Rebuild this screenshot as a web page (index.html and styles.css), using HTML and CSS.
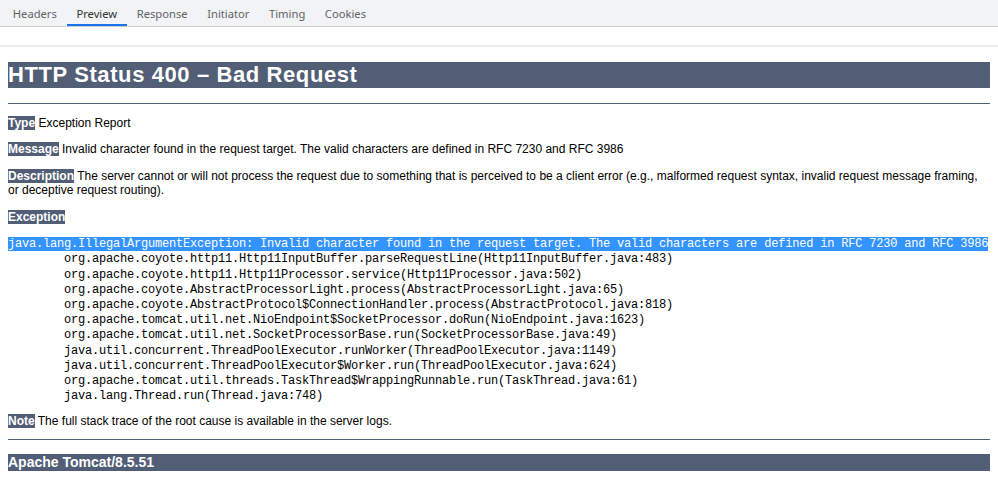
FILE: index.html
```html
<!DOCTYPE html>
<html>
<head>
<meta charset="utf-8">
<title>HTTP Status 400 – Bad Request</title>
<link rel="stylesheet" href="styles.css">
</head>
<body>
<div class="tabs">
  <div class="tab">Headers</div>
  <div class="tab active">Preview</div>
  <div class="tab">Response</div>
  <div class="tab">Initiator</div>
  <div class="tab">Timing</div>
  <div class="tab">Cookies</div>
</div>
<div class="spacer"></div>
<div class="divider"></div>
<div class="preview">
<h1>HTTP Status 400 – Bad Request</h1>
<hr class="line">
<p><b>Type</b> Exception Report</p>
<p><b>Message</b> Invalid character found in the request target. The valid characters are defined in RFC 7230 and RFC 3986</p>
<p><b>Description</b> The server cannot or will not process the request due to something that is perceived to be a client error (e.g., malformed request syntax, invalid request message framing, or deceptive request routing).</p>
<p><b>Exception</b></p>
<pre><span class="sel">java.lang.IllegalArgumentException: Invalid character found in the request target. The valid characters are defined in RFC 7230 and RFC 3986</span>
	org.apache.coyote.http11.Http11InputBuffer.parseRequestLine(Http11InputBuffer.java:483)
	org.apache.coyote.http11.Http11Processor.service(Http11Processor.java:502)
	org.apache.coyote.AbstractProcessorLight.process(AbstractProcessorLight.java:65)
	org.apache.coyote.AbstractProtocol$ConnectionHandler.process(AbstractProtocol.java:818)
	org.apache.tomcat.util.net.NioEndpoint$SocketProcessor.doRun(NioEndpoint.java:1623)
	org.apache.tomcat.util.net.SocketProcessorBase.run(SocketProcessorBase.java:49)
	java.util.concurrent.ThreadPoolExecutor.runWorker(ThreadPoolExecutor.java:1149)
	java.util.concurrent.ThreadPoolExecutor$Worker.run(ThreadPoolExecutor.java:624)
	org.apache.tomcat.util.threads.TaskThread$WrappingRunnable.run(TaskThread.java:61)
	java.lang.Thread.run(Thread.java:748)
</pre>
<p class="note"><b>Note</b> The full stack trace of the root cause is available in the server logs.</p>
<hr class="line">
<h3>Apache Tomcat/8.5.51</h3>
</div>
</body>
</html>
```

FILE: styles.css
```css
html, body {
  margin: 0;
  padding: 0;
  background: #fff;
}

.tabs {
  display: flex;
  height: 26px;
  padding-left: 3px;
  background: #f1f3f4;
  border-bottom: 1px solid #cacdd1;
  font-family: "Noto Sans", "Liberation Sans", sans-serif;
  font-size: 11.2px;
  color: #5f6368;
}

.tab {
  box-sizing: border-box;
  height: 26px;
  padding: 1px 9.8px 0;
  border-bottom: 2px solid transparent;
  line-height: 25px;
}

.tab.active {
  color: #303236;
  border-bottom-color: #1a73e8;
}

.spacer {
  height: 18px;
}

.divider {
  height: 2px;
  background: #ececec;
}

.preview {
  padding: 0 8px;
  font-family: "Liberation Sans", Arial, sans-serif;
  color: #000;
}

h1 {
  margin: 15px 0 14.7px;
  font-family: "Liberation Sans", Arial, sans-serif;
  font-size: 22px;
  line-height: 26px;
  letter-spacing: 0.6px;
  color: #fff;
  background-color: #525D76;
}

h3 {
  margin: 14px 0 0;
  font-family: "Liberation Sans", Arial, sans-serif;
  font-size: 14px;
  line-height: 17px;
  color: #fff;
  background-color: #525D76;
}

hr.line {
  height: 1px;
  margin: 0;
  border: none;
  background-color: #525D76;
}

p {
  margin: 12px 0;
  font-size: 12px;
  line-height: 14.5px;
  color: #000;
}

p.note {
  margin-top: 10px;
  margin-bottom: 10px;
}

b {
  color: #fff;
  background-color: #525D76;
}

pre {
  margin: 13px 0 10px;
  font-family: "Liberation Mono", "DejaVu Sans Mono", monospace;
  font-size: 12px;
  line-height: 15.2px;
  letter-spacing: -0.2px;
  tab-size: 8;
  color: #000;
}

.sel {
  background: #3393ff;
  color: #fff;
}
```
